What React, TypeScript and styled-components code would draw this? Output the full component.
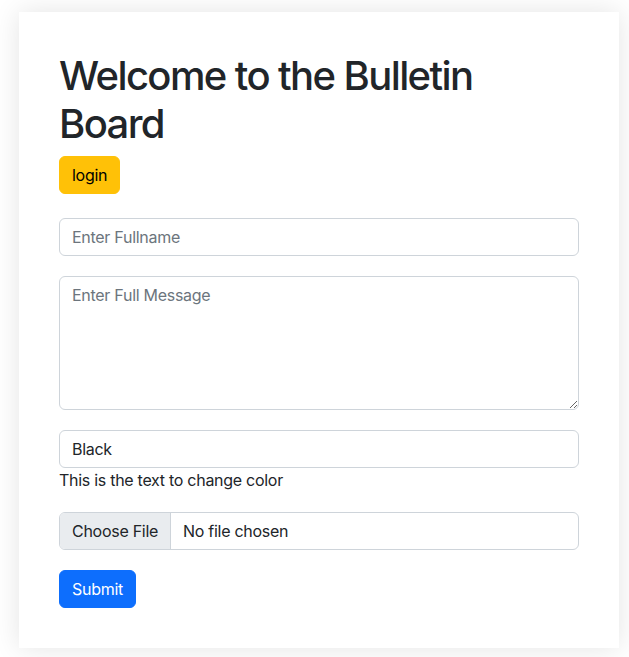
import React from "react";
import styled, { createGlobalStyle } from "styled-components";

const Global = createGlobalStyle`
  html, body { margin: 0; padding: 0; background: #ffffff; }
  body {
    font-family: Inter, "Noto Sans", "Liberation Sans", sans-serif;
    color: #212529;
    font-size: 16px;
    line-height: 1.5;
    letter-spacing: -0.28px;
  }
  * { box-sizing: border-box; }
`;

const Page = styled.div`
  padding: 12px 10px 10px 19px;
`;

const Card = styled.div`
  width: 600px;
  background: #fff;
  padding: 40px;
  box-shadow: 0 0 26px rgba(0, 0, 0, 0.11);
`;

const Title = styled.h1`
  margin: 0 0 8px;
  font-size: 40px;
  line-height: 1.2;
  font-weight: 500;
  letter-spacing: -1.6px;
  color: #212529;
`;

const Btn = styled.button<{ $variant: "warning" | "primary" }>`
  display: inline-block;
  font-family: inherit;
  letter-spacing: inherit;
  font-size: 16px;
  line-height: 24px;
  padding: 6px 12px;
  border-radius: 6px;
  border: 1px solid ${(p) => (p.$variant === "warning" ? "#ffc107" : "#0d6efd")};
  background: ${(p) => (p.$variant === "warning" ? "#ffc107" : "#0d6efd")};
  color: ${(p) => (p.$variant === "warning" ? "#000" : "#fff")};
  cursor: pointer;
`;

const Form = styled.form`
  display: flex;
  flex-direction: column;
  gap: 20px;
  margin-top: 24px;
  align-items: flex-start;
`;

const Group = styled.div`
  width: 100%;
`;

const Input = styled.input`
  display: block;
  width: 100%;
  font-family: inherit;
  letter-spacing: inherit;
  font-size: 16px;
  line-height: 24px;
  padding: 6px 12px;
  color: #212529;
  background: #fff;
  border: 1px solid #ced4da;
  border-radius: 6px;
  outline: none;
  &::placeholder { color: #6c757d; }
`;

const TextArea = styled.textarea`
  display: block;
  width: 100%;
  font-family: inherit;
  letter-spacing: inherit;
  font-size: 16px;
  line-height: 24px;
  padding: 6px 12px;
  color: #212529;
  background: #fff;
  border: 1px solid #ced4da;
  border-radius: 6px;
  outline: none;
  resize: vertical;
  height: 134px;
  &::placeholder { color: #6c757d; }
`;

const Note = styled.p`
  margin: 0;
  line-height: 24px;
`;

const FileBox = styled.label`
  display: flex;
  width: 100%;
  height: 38px;
  border: 1px solid #ced4da;
  border-radius: 6px;
  overflow: hidden;
  cursor: pointer;
`;

const FileButton = styled.span`
  display: flex;
  align-items: center;
  padding: 0 12px;
  background: #e9ecef;
  border-right: 1px solid #ced4da;
  color: #212529;
`;

const FileName = styled.span`
  display: flex;
  align-items: center;
  padding: 0 12px;
  color: #212529;
`;

export default function App() {
  return (
    <>
      <Global />
      <Page>
        <Card>
          <Title>Welcome to the Bulletin Board</Title>
          <Btn $variant="warning" type="button">login</Btn>
          <Form onSubmit={(e) => e.preventDefault()}>
            <Group>
              <Input placeholder="Enter Fullname" />
            </Group>
            <Group>
              <TextArea placeholder="Enter Full Message" rows={5} />
            </Group>
            <Group>
              <Input defaultValue="Black" />
              <Note>This is the text to change color</Note>
            </Group>
            <Group>
              <FileBox>
                <FileButton>Choose File</FileButton>
                <FileName>No file chosen</FileName>
              </FileBox>
            </Group>
            <Btn $variant="primary" type="submit">Submit</Btn>
          </Form>
        </Card>
      </Page>
    </>
  );
}
